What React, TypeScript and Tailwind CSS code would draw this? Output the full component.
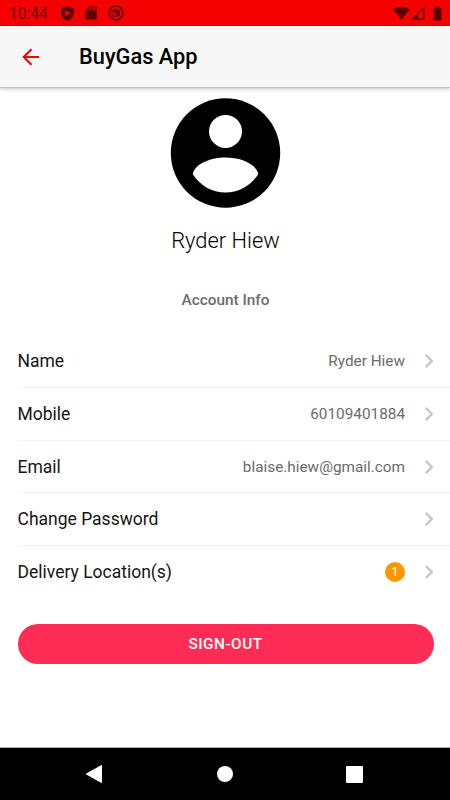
import React from "react";

type Row = { label: string; value?: string; badge?: string };

const rows: Row[] = [
  { label: "Name", value: "Ryder Hiew" },
  { label: "Mobile", value: "60109401884" },
  { label: "Email", value: "blaise.hiew@gmail.com" },
  { label: "Change Password" },
  { label: "Delivery Location(s)", badge: "1" },
];

function StatusBar() {
  return (
    <div className="flex h-[26px] shrink-0 items-center justify-between bg-[#f40000] text-[#5f0000]">
      <div className="flex items-center pl-[9px]">
        <span className="w-[52px] pt-[2px] text-[15.6px] leading-[24px] text-[#6a0000]">10:44</span>
        <svg className="h-[15px] w-[13px]" viewBox="0 0 13 15" fill="currentColor">
          <path fillRule="evenodd" d="M6.5 0L.2 2.3v4.8c0 3.6 2.6 6.6 6.3 7.9 3.7-1.3 6.3-4.3 6.3-7.9V2.3zM4.2 4.1l5.5 3.1-5.5 3.1z" />
        </svg>
        <svg className="ml-[11px] h-[14px] w-[12px]" viewBox="0 0 12 14" fill="currentColor">
          <path fillRule="evenodd" d="M4.2.5h6.4c.7 0 1.2.5 1.2 1.2v10.6c0 .7-.5 1.2-1.2 1.2H1.7c-.7 0-1.2-.5-1.2-1.2v-8zM4.3 2v2.7h1.2V2zm2.3 0v2.7h1.2V2zm2.3 0v2.7h1.2V2z" />
        </svg>
        <svg className="ml-[11px] h-[16px] w-[16px]" viewBox="0 0 16 16" fill="none" stroke="currentColor">
          <circle cx="8" cy="8" r="6.9" strokeWidth="1.5" />
          <path d="M4.6 4.8l6.9 6.3" strokeWidth="1.5" />
          <path d="M4.3 6.2A4.2 4.2 0 0 0 5.6 11.2H9" strokeWidth="1.3" />
          <path d="M6 4.5A4.1 4.1 0 0 1 11.8 9.8z" fill="currentColor" stroke="none" />
        </svg>
      </div>
      <div className="flex items-center pr-[8px]">
        <svg className="h-[14px] w-[17px]" viewBox="0 0 17 14" fill="currentColor">
          <path d="M.4 3.7C5-.1 12-.1 16.6 3.7L8.5 13.5z" />
        </svg>
        <svg className="ml-px h-[14px] w-[14px]" viewBox="0 0 14 14" fill="currentColor">
          <path fillRule="evenodd" d="M13.5.3V13.5H.3zM7.2 7.8v4.5h5V3.2z" />
        </svg>
        <svg className="ml-[8px] h-[15px] w-[9px]" viewBox="0 0 9 15" fill="currentColor">
          <path d="M2.7.5h3.6V2h1.3c.5 0 .9.4.9.9v10.7c0 .5-.4.9-.9.9H1.4c-.5 0-.9-.4-.9-.9V2.9c0-.5.4-.9.9-.9h1.3z" />
        </svg>
      </div>
    </div>
  );
}

function Header() {
  return (
    <header className="z-10 flex h-[61px] shrink-0 items-center bg-[#f7f7f7] shadow-[0_1px_0_#c4c4c4,0_2px_4px_rgba(0,0,0,0.24)]">
      <svg className="ml-[22px] h-[18px] w-[18px]" viewBox="0 0 18 18" fill="none" stroke="#f40000" strokeWidth="2">
        <path d="M17.2 9H1.6M9.5 1.2L1.7 9l7.8 7.8" />
      </svg>
      <h1 className="ml-[39px] text-[21.8px] font-medium leading-[30px] text-black">BuyGas App</h1>
    </header>
  );
}

function Chevron() {
  return (
    <svg className="ml-[20px] mr-[17px] h-[14px] w-[8px] shrink-0" viewBox="0 0 8 14" fill="none" stroke="#c7c7c7" strokeWidth="2.4">
      <path d="M.8 .9L6.7 7 .8 13.1" />
    </svg>
  );
}

function AccountRow({ label, value, badge, last }: Row & { last: boolean }) {
  return (
    <li className={`flex h-[52.6px] items-center ${last ? "" : "border-b border-[#f0f0f0]"}`}>
      <span className="flex-1 text-[17.5px] leading-[24px] text-[#151515]">{label}</span>
      {value && <span className="text-[15.33px] leading-[24px] text-[#6b6b6b]">{value}</span>}
      {badge && (
        <span className="flex h-5 w-5 items-center justify-center rounded-full bg-[#ff9500] text-[13.1px] leading-5 text-white">
          {badge}
        </span>
      )}
      <Chevron />
    </li>
  );
}

function SystemNav() {
  return (
    <nav className="flex h-[52px] shrink-0 items-center bg-black pl-[85px]">
      <svg className="h-5 w-[17px]" viewBox="0 0 17 20" fill="#fff">
        <path d="M16 1.2c.5-.3 1 0 1 .5v16.6c0 .5-.5.8-1 .5L1.3 10.6c-.5-.3-.5-.9 0-1.2z" />
      </svg>
      <span className="ml-[115px] h-4 w-4 rounded-full bg-white" />
      <span className="ml-[113px] h-[17px] w-[17px] rounded-[1px] bg-white" />
    </nav>
  );
}

export default function App() {
  return (
    <div className="flex h-[800px] w-[450px] flex-col overflow-hidden bg-white font-['Roboto',sans-serif]">
      <StatusBar />
      <Header />
      <main className="flex flex-1 flex-col border-b border-[#aaaaaa]">
        <svg className="ml-[170px] mt-[11px] h-[110px] w-[111px]" viewBox="0 0 111 110">
          <circle cx="55.5" cy="55" r="54.7" fill="#000" />
          <circle cx="55.5" cy="33.4" r="16.5" fill="#fff" />
          <path d="M22.7 76C25 65 42 59.5 55.5 59.5S86 65 88.3 76C81 87.8 69 94.5 55.5 94.5S30 87.8 22.7 76z" fill="#fff" />
        </svg>
        <h2 className="mt-[18px] pl-px text-center text-[21.9px] font-light leading-[30px] text-black">Ryder Hiew</h2>
        <p className="mt-[32px] pl-px text-center text-[15.33px] font-medium leading-[24px] text-[#6d6d6d]">Account Info</p>
        <ul className="mt-[23.7px] pl-[17.5px]">
          {rows.map((row, i) => (
            <AccountRow key={row.label} {...row} last={i === rows.length - 1} />
          ))}
        </ul>
        <button className="ml-[17.5px] mr-[16.5px] mt-[25.7px] h-[39.4px] rounded-full bg-[#ff2d55] pt-px text-[15.33px] font-medium tracking-[0.5px] text-white">
          SIGN-OUT
        </button>
      </main>
      <SystemNav />
    </div>
  );
}
